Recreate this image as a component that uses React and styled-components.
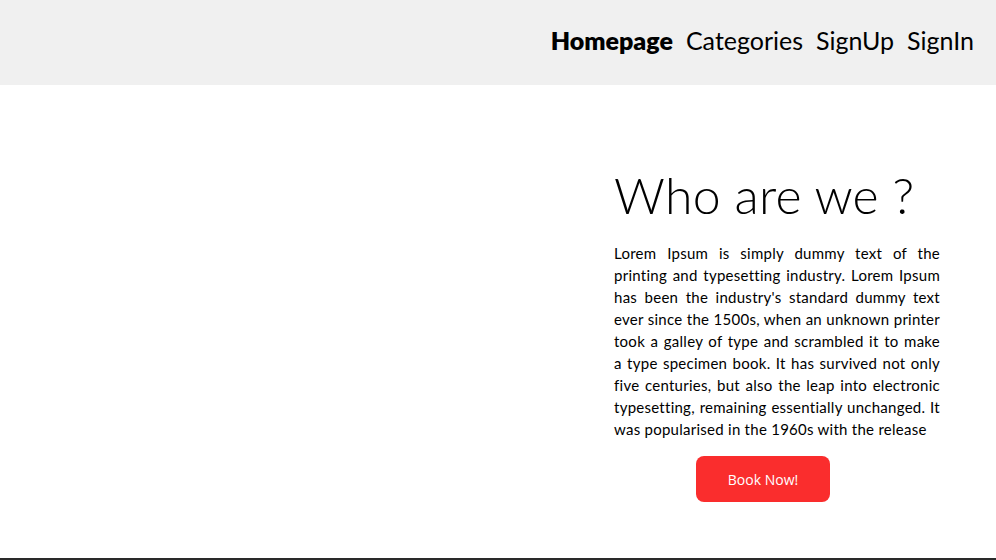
import React from 'react';
import styled, { createGlobalStyle } from 'styled-components';

const GlobalStyle = createGlobalStyle`
    html, body {
        margin: 0;
        padding: 0;
        background: #ffffff;
        font-family: "Lato", "Open Sans", sans-serif;
        color: #000000;
    }
`;

const Page = styled.div`
    width: 100%;
    min-height: 560px;
    display: flex;
    flex-direction: column;
`;

const Header = styled.header`
    height: 85px;
    background: #f0f0f0;
    display: flex;
    align-items: center;
    justify-content: flex-end;
    padding: 0 22px 5px 0;
    box-sizing: border-box;
`;

const Nav = styled.nav`
    display: flex;
    gap: 13px;
`;

const NavLink = styled.a`
    font-size: 25px;
    font-weight: ${p => (p.$active ? 800 : 400)};
    color: #000000;
    text-decoration: none;
`;

const Main = styled.main`
    flex: 1;
    display: grid;
    grid-template-columns: 1fr 326px;
    padding: 80px 56px 0 0;
    box-sizing: border-box;
`;

const Visual = styled.div``;

const About = styled.section`
    display: flex;
    flex-direction: column;
`;

const Title = styled.h1`
    margin: 0;
    font-size: 50px;
    font-weight: 300;
    line-height: 60px;
    letter-spacing: 0.2px;
`;

const Text = styled.p`
    margin: 17px 0 0;
    font-size: 15px;
    line-height: 22px;
    letter-spacing: 0.26px;
    text-align: justify;
`;

const BookButton = styled.button`
    align-self: flex-start;
    margin: 16px 0 0 82px;
    width: 134px;
    height: 46px;
    border: none;
    border-radius: 8px;
    background: #fa2d2d;
    color: #ffffff;
    font-family: "Open Sans", sans-serif;
    font-size: 14px;
    cursor: pointer;
`;

const Footer = styled.footer`
    height: 2px;
    background: #2a2a2a;
`;

export default function App() {
    return (
        <Page>
            <GlobalStyle />
            <Header>
                <Nav>
                    <NavLink $active href="#">Homepage</NavLink>
                    <NavLink href="#">Categories</NavLink>
                    <NavLink href="#">SignUp</NavLink>
                    <NavLink href="#">SignIn</NavLink>
                </Nav>
            </Header>
            <Main>
                <Visual />
                <About>
                    <Title>Who are we ?</Title>
                    <Text>
                        Lorem Ipsum is simply dummy text of the printing and typesetting industry. Lorem Ipsum
                        has been the industry's standard dummy text ever since the 1500s, when an unknown printer
                        took a galley of type and scrambled it to make a{'\u00a0'}type specimen book. It has survived not
                        only five centuries, but also the leap into electronic typesetting, remaining essentially
                        unchanged. It was popularised in the 1960s with the release
                    </Text>
                    <BookButton>Book Now!</BookButton>
                </About>
            </Main>
            <Footer />
        </Page>
    );
}
